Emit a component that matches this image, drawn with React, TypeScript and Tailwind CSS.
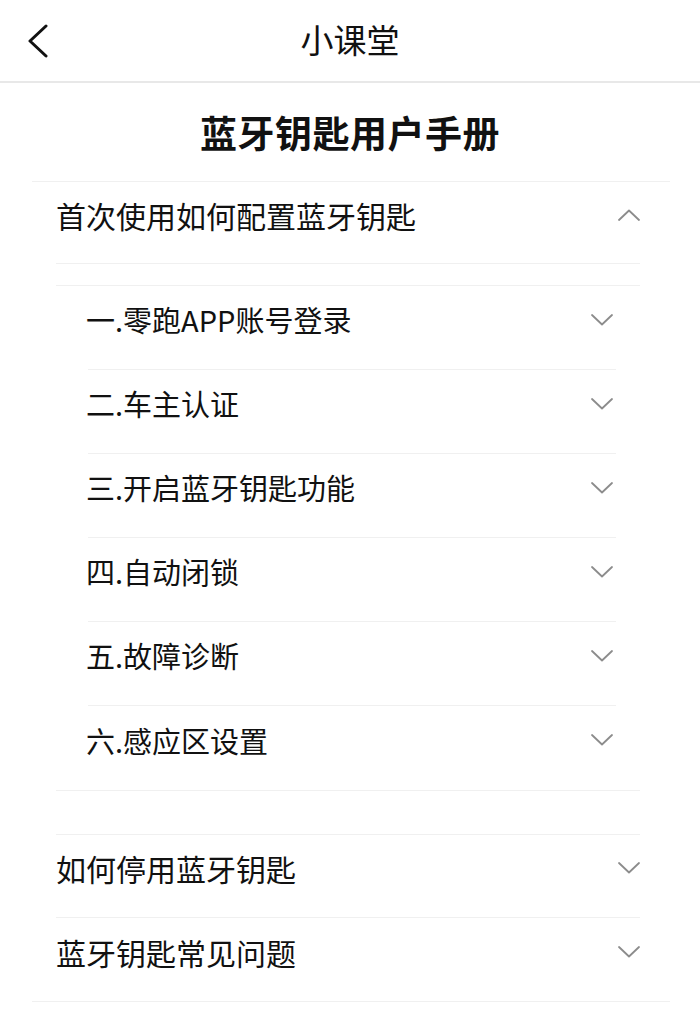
import React from 'react';

const Chevron: React.FC<{ up?: boolean; className?: string }> = ({ up, className }) => (
  <svg width="22" height="12" viewBox="0 0 22 12" className={className} fill="none">
    <polyline
      points={up ? '1,11 11,1.5 21,11' : '1,1 11,10.5 21,1'}
      stroke="#8c8c8c"
      strokeWidth="1.8"
      strokeLinecap="round"
      strokeLinejoin="round"
    />
  </svg>
);

const App: React.FC = () => {
  const steps = [
    '一.零跑APP账号登录',
    '二.车主认证',
    '三.开启蓝牙钥匙功能',
    '四.自动闭锁',
    '五.故障诊断',
    '六.感应区设置',
  ];

  return (
    <div
      className="w-[700px] min-h-[1012px] bg-white text-[#111]"
      style={{ fontFamily: '"Noto Sans CJK SC", "Noto Sans", sans-serif' }}
    >
      {/* Header */}
      <div className="h-[83px] grid grid-cols-[1fr_auto_1fr] items-center border-b-2 border-[#e8e8e8]">
        <div className="pl-[27px] flex items-center">
          <svg width="22" height="34" viewBox="0 0 22 34" fill="none">
            <polyline
              points="19,2 3,17 19,32"
              stroke="#111"
              strokeWidth="3"
              strokeLinecap="round"
              strokeLinejoin="round"
            />
          </svg>
        </div>
        <h1 className="text-[33px] leading-none font-normal pb-[2px]">小课堂</h1>
        <div />
      </div>

      {/* Title */}
      <div className="h-[98px] flex items-center justify-center">
        <h2 className="text-[37px] leading-none font-semibold tracking-[0.5px]">蓝牙钥匙用户手册</h2>
      </div>

      {/* Manual */}
      <div className="ml-8 mr-[30px] border-t border-b border-[#f0f0f0]">
        <div className="ml-6 mr-[30px]">
          {/* Expanded section */}
          <div className="h-[82px] flex items-center justify-between pb-4 border-b border-[#f0f0f0]">
            <span className="text-[30px] leading-none">首次使用如何配置蓝牙钥匙</span>
            <Chevron up />
          </div>
          <div className="h-[21px]" />
          <div className="border-t border-b border-[#f0f0f0]">
            <div className="ml-8 mr-6">
              {steps.map((step, i) => (
                <div
                  key={step}
                  className={`h-[84px] flex items-center justify-between pb-4 ${
                    i < steps.length - 1 ? 'border-b border-[#f0f0f0]' : ''
                  }`}
                >
                  <span className="text-[29px] leading-none -ml-[2px]">{step}</span>
                  <Chevron className="mr-[3px]" />
                </div>
              ))}
            </div>
          </div>
          <div className="h-[43px]" />

          {/* Collapsed sections */}
          <div className="h-[84px] flex items-center justify-between pb-4 border-t border-b border-[#f0f0f0]">
            <span className="text-[30px] leading-none">如何停用蓝牙钥匙</span>
            <Chevron />
          </div>
          <div className="h-[83px] flex items-center justify-between pb-4">
            <span className="text-[30px] leading-none">蓝牙钥匙常见问题</span>
            <Chevron />
          </div>
        </div>
      </div>
    </div>
  );
};

export default App;
